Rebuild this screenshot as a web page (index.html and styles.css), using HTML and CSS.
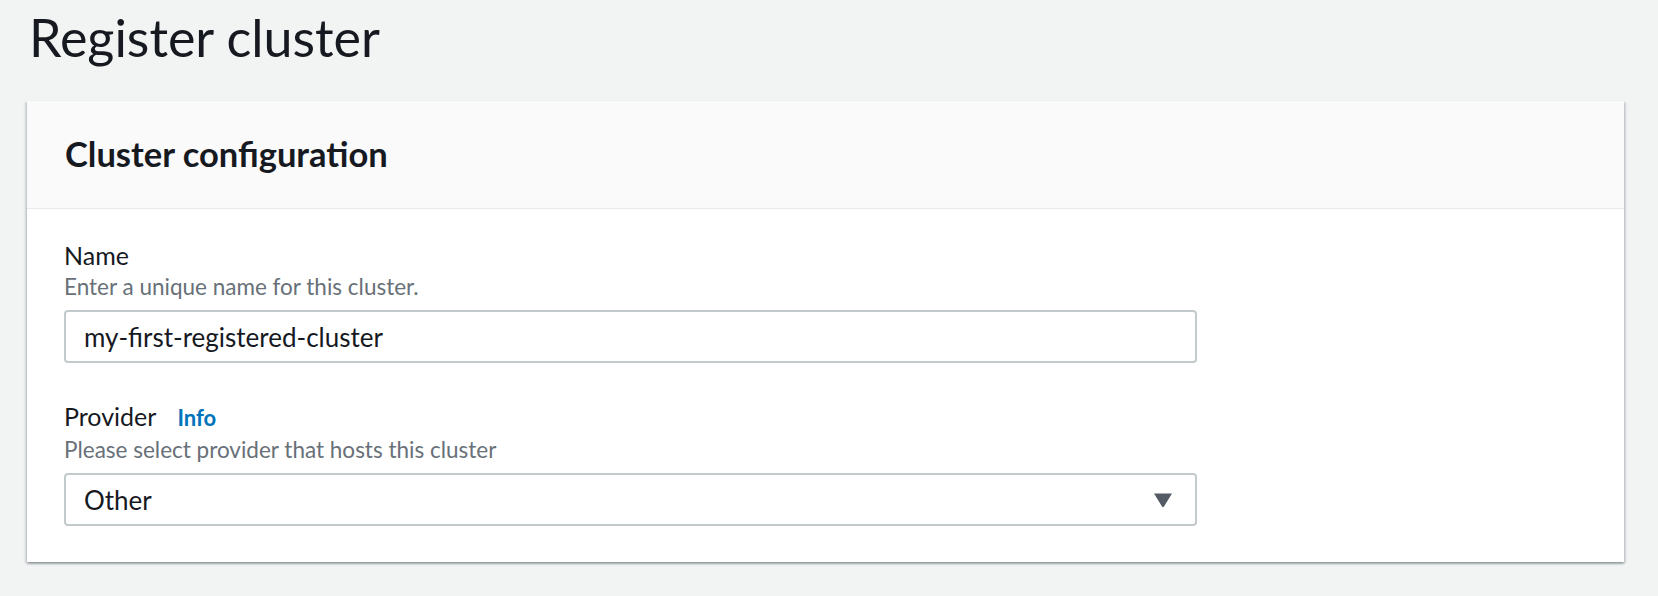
FILE: index.html
```html
<!DOCTYPE html>
<html lang="en">
<head>
<meta charset="utf-8">
<title>Register cluster</title>
<link rel="stylesheet" href="styles.css">
</head>
<body>
<main class="page">
  <h1 class="title">Register cluster</h1>
  <section class="card">
    <header class="card-header">
      <h2 class="card-title">Cluster configuration</h2>
    </header>
    <div class="card-body">
      <div class="field">
        <label class="label" for="name">Name</label>
        <div class="desc">Enter a unique name for this cluster.</div>
        <input class="control" id="name" type="text" value="my-first-registered-cluster" readonly>
      </div>
      <div class="field field-gap">
        <div class="label">Provider <a class="info" href="#">Info</a></div>
        <div class="desc">Please select provider that hosts this cluster</div>
        <div class="control select">
          <span>Other</span>
          <svg class="caret" width="20" height="16" viewBox="0 0 20 16"><path d="M1 1.5 H19 L11 14.5 Q10 15.8 9 14.5 Z" fill="#545b64"/></svg>
        </div>
      </div>
    </div>
  </section>
</main>
</body>
</html>
```
FILE: styles.css
```css
* { box-sizing: border-box; }
html, body { margin: 0; padding: 0; }
body {
  background: #f2f3f3;
  font-family: Lato, "Open Sans", sans-serif;
  color: #16191f;
  width: 1658px;
  height: 596px;
  overflow: hidden;
}
.page {
  padding: 7px 34px 0 27px;
}
.title {
  margin: 0 0 34px 2px;
  font-size: 52px;
  line-height: 60px;
  font-weight: 400;
  color: #16191f;
}
.card {
  background: #fff;
  width: 1597px;
  box-shadow: 0 2px 2px 0 rgba(0, 28, 36, 0.28), 2px 1px 2px 0 rgba(0, 28, 36, 0.12), -2px 1px 2px 0 rgba(0, 28, 36, 0.12);
}
.card-header {
  background: #fafafa;
  padding: 33px 38px 34px;
  border-bottom: 1px solid #e7eaea;
}
.card-title {
  margin: 0;
  font-size: 34.5px;
  line-height: 40px;
  font-weight: 700;
}
.card-body {
  padding: 30px 37px 36px;
}
.field { display: flex; flex-direction: column; align-items: flex-start; }
.field-gap { margin-top: 37px; }
.label {
  font-size: 25px;
  line-height: 32px;
  color: #16191f;
  display: flex;
  align-items: baseline;
}
.info {
  margin-left: 21px;
  font-size: 22px;
  font-weight: 700;
  color: #0073bb;
  text-decoration: none;
}
.desc {
  margin-top: 2px;
  font-size: 22.5px;
  line-height: 28px;
  color: #687078;
}
.control {
  margin-top: 9px;
  width: 1133px;
  height: 53px;
  border: 2px solid #c3cacb;
  border-radius: 4px;
  background: #fff;
  padding: 0 18px;
  font-family: inherit;
  font-size: 26px;
  color: #16191f;
  outline: none;
}
.select {
  display: flex;
  align-items: center;
  justify-content: space-between;
  padding-right: 22px;
}
.caret { display: block; }
```
